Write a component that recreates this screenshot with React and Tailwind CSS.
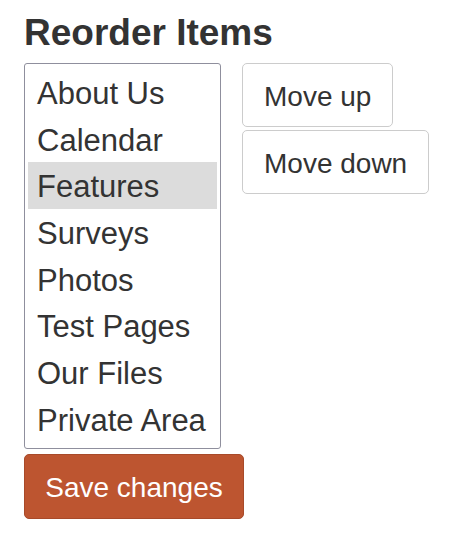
import React, { useState } from 'react';

const items = ['About Us', 'Calendar', 'Features', 'Surveys', 'Photos', 'Test Pages', 'Our Files', 'Private Area'];

const App = () => {
  const [selected, setSelected] = useState(2);

  return (
    <div className="min-h-screen w-full bg-white pl-6 pt-[14px] text-[#333333]" style={{ fontFamily: '"Liberation Sans", Arial, sans-serif' }}>
      <h3 className="text-[37px] font-bold leading-none mb-[12px]">Reorder Items</h3>

      <div className="flex items-start">
        {/* list box */}
        <div className="w-[197px] border border-[#8f8f9d] rounded-[3px] px-[3px] py-[5px] bg-white">
          {items.map((item, i) => (
            <div
              key={item}
              onClick={() => setSelected(i)}
              className={`h-[46.7px] leading-[46.7px] pt-[2px] pl-[9px] text-[31px] whitespace-nowrap cursor-default ${i === selected ? 'bg-[#dcdcdc]' : ''}`}
            >
              {item}
            </div>
          ))}
        </div>

        <div className="ml-[21px] flex flex-col items-start gap-[3px]">
          <button className="h-[64px] px-[21px] pt-[4px] border border-[#cccccc] rounded-[5px] bg-white text-[28px] leading-none text-[#333333]">
            Move up
          </button>
          <button className="h-[64px] px-[21px] pt-[4px] border border-[#cccccc] rounded-[5px] bg-white text-[28px] leading-none text-[#333333]">
            Move down
          </button>
        </div>
      </div>

      <button className="mt-[5px] h-[65px] w-[220px] pt-[4px] border border-[#a84a2a] rounded-[5px] bg-[#bd5530] text-[28px] leading-none text-white">
        Save changes
      </button>
    </div>
  );
};

export default App;
